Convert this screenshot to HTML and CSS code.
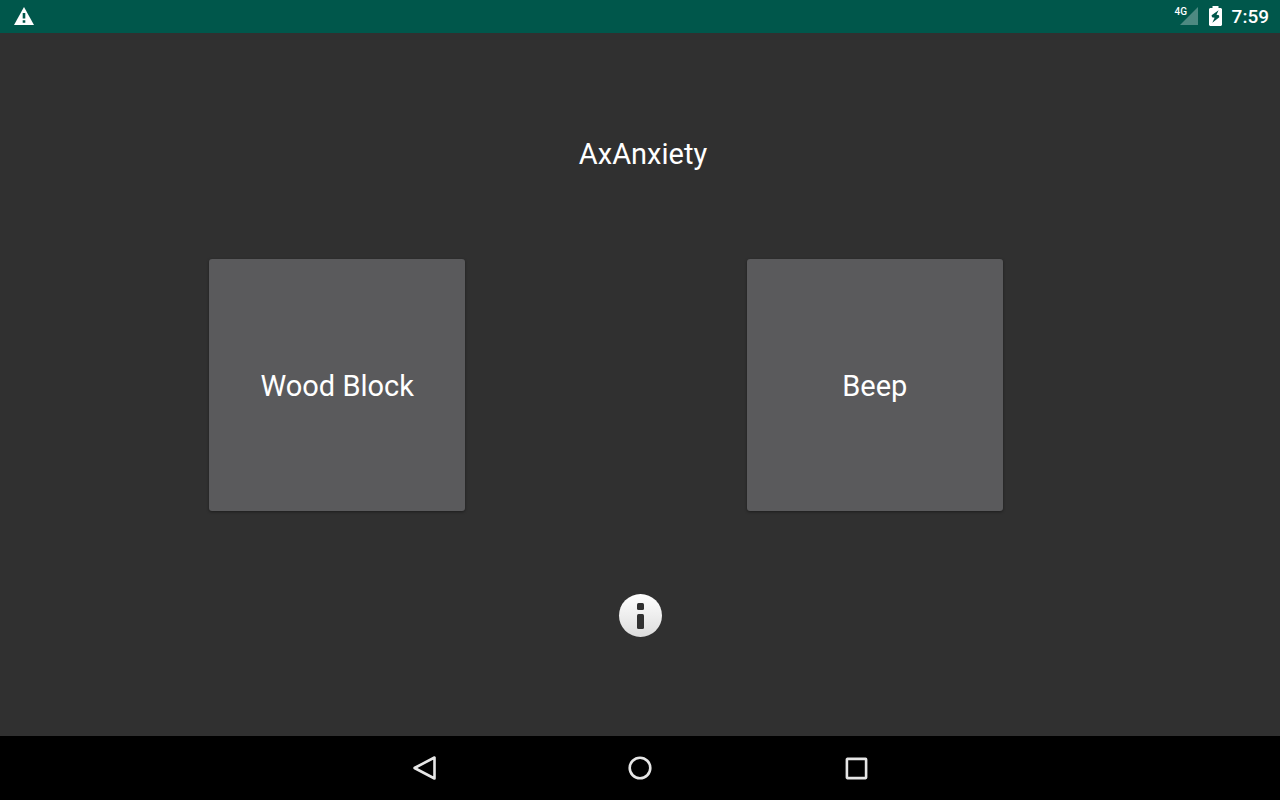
FILE: index.html
```html
<!DOCTYPE html>
<html lang="en">
<head>
<meta charset="utf-8">
<meta name="viewport" content="width=device-width, initial-scale=1">
<title>AxAnxiety</title>
<link rel="stylesheet" href="styles.css">
</head>
<body>
<header class="status-bar">
  <svg class="icon" width="20" height="19" viewBox="0 0 20 19" role="img" aria-label="Warning"><path fill="#fff" d="M10 0 20 18H0Z"/><path fill="#00574b" d="M8.700 6h2.600v5.500H8.700zM8.700 13.200h2.600v2.600H8.700z"/></svg>
  <div class="status-items">
    <span class="signal">
      <svg class="icon" width="18" height="18" viewBox="0 0 18 18" aria-hidden="true"><path fill="#4d8981" d="M18 0v18H0z"/></svg>
      <span class="network">4G</span>
    </span>
    <svg class="icon battery" width="13" height="20" viewBox="0 0 13 20" role="img" aria-label="Battery charging"><path fill="#fff" d="M3.500 0h6v2H12l1 1v16l-1 1H1l-1-1V3l1-1h2.500Z"/><path fill="#00574b" d="M9.600 4.300 2.600 9.300 3 11.300 5.600 11.800 3.300 16.800 10.300 11.300 10 9.300 7.500 8.800Z"/></svg>
    <time class="clock">7:59</time>
  </div>
</header>
<main class="content">
  <h1 class="title">AxAnxiety</h1>
  <div class="sounds">
    <button class="sound" type="button">Wood Block</button>
    <button class="sound" type="button">Beep</button>
  </div>
  <button class="info" type="button" aria-label="Information">
    <svg class="icon" width="44" height="44" viewBox="0 0 44 44" aria-hidden="true">
      <defs><linearGradient id="shine" x1="0" y1="0" x2="0" y2="1"><stop offset="0" stop-color="#fff"/><stop offset="1" stop-color="#dcdcdc"/></linearGradient></defs>
      <circle cx="22.500" cy="21.500" r="21.500" fill="url(#shine)"/>
      <rect x="19" y="9" width="7" height="7" rx="1.500" fill="#303030"/>
      <rect x="19" y="20" width="7" height="15" rx="1.500" fill="#303030"/>
    </svg>
  </button>
</main>
<nav class="nav-bar" aria-label="System">
  <button class="nav-button" type="button" aria-label="Back"><svg class="icon" width="28" height="28" viewBox="0 0 28 28"><path d="M24.500 3.500v21L4.500 14Z"/></svg></button>
  <button class="nav-button" type="button" aria-label="Home"><svg class="icon" width="28" height="28" viewBox="0 0 28 28"><circle cx="14" cy="14" r="10.300"/></svg></button>
  <button class="nav-button" type="button" aria-label="Recent apps"><svg class="icon" width="28" height="28" viewBox="0 0 28 28"><rect x="4.900" y="4.900" width="19.200" height="19.200" rx=".5"/></svg></button>
</nav>
</body>
</html>
```
FILE: styles.css
```css
* {
  box-sizing: border-box;
}

body {
  margin: 0;
  min-height: 100vh;
  display: flex;
  flex-direction: column;
  background: #303030;
  color: #fff;
  font-family: Roboto, sans-serif;
}

button {
  margin: 0;
  padding: 0;
  border: 0;
  background: none;
  color: inherit;
  font: inherit;
  cursor: pointer;
}

.icon {
  display: block;
}

.status-bar {
  height: 33px;
  padding: 0 11px 0 14px;
  display: flex;
  align-items: center;
  justify-content: space-between;
  background: #00574b;
}

.status-items {
  display: flex;
  align-items: center;
}

.signal {
  position: relative;
  padding: 0 0 2px 5px;
}

.network {
  position: absolute;
  top: 0;
  left: 0;
  font-size: 10px;
  line-height: 10px;
  font-weight: 500;
}

.battery {
  margin: 0 10px 2px 11px;
}

.clock {
  font-size: 19px;
  line-height: 24px;
  font-weight: 500;
}

.content {
  flex: 1;
  display: flex;
  flex-direction: column;
  align-items: center;
  justify-content: center;
  padding-top: 4px;
}

.title {
  margin: 0 0 86px;
  padding-left: 6px;
  font-size: 29px;
  line-height: 38px;
  font-weight: 400;
}

.sounds {
  display: flex;
  gap: 22vw;
  margin: 0 68px 83px 0;
}

.sound {
  width: 20vw;
  height: 252px;
  padding-top: 2px;
  border-radius: 3px;
  background: #5a5a5c;
  box-shadow: 0 1px 3px rgba(0, 0, 0, 0.4);
  font-size: 29px;
  line-height: 38px;
}

.info {
  border-radius: 50%;
}

.nav-bar {
  height: 64px;
  display: flex;
  justify-content: center;
  background: #000;
}

.nav-button {
  width: 216px;
  display: flex;
  align-items: center;
  justify-content: center;
}

.nav-button .icon {
  fill: none;
  stroke: #e6e6e6;
  stroke-width: 2.600;
  stroke-linejoin: round;
}
```
